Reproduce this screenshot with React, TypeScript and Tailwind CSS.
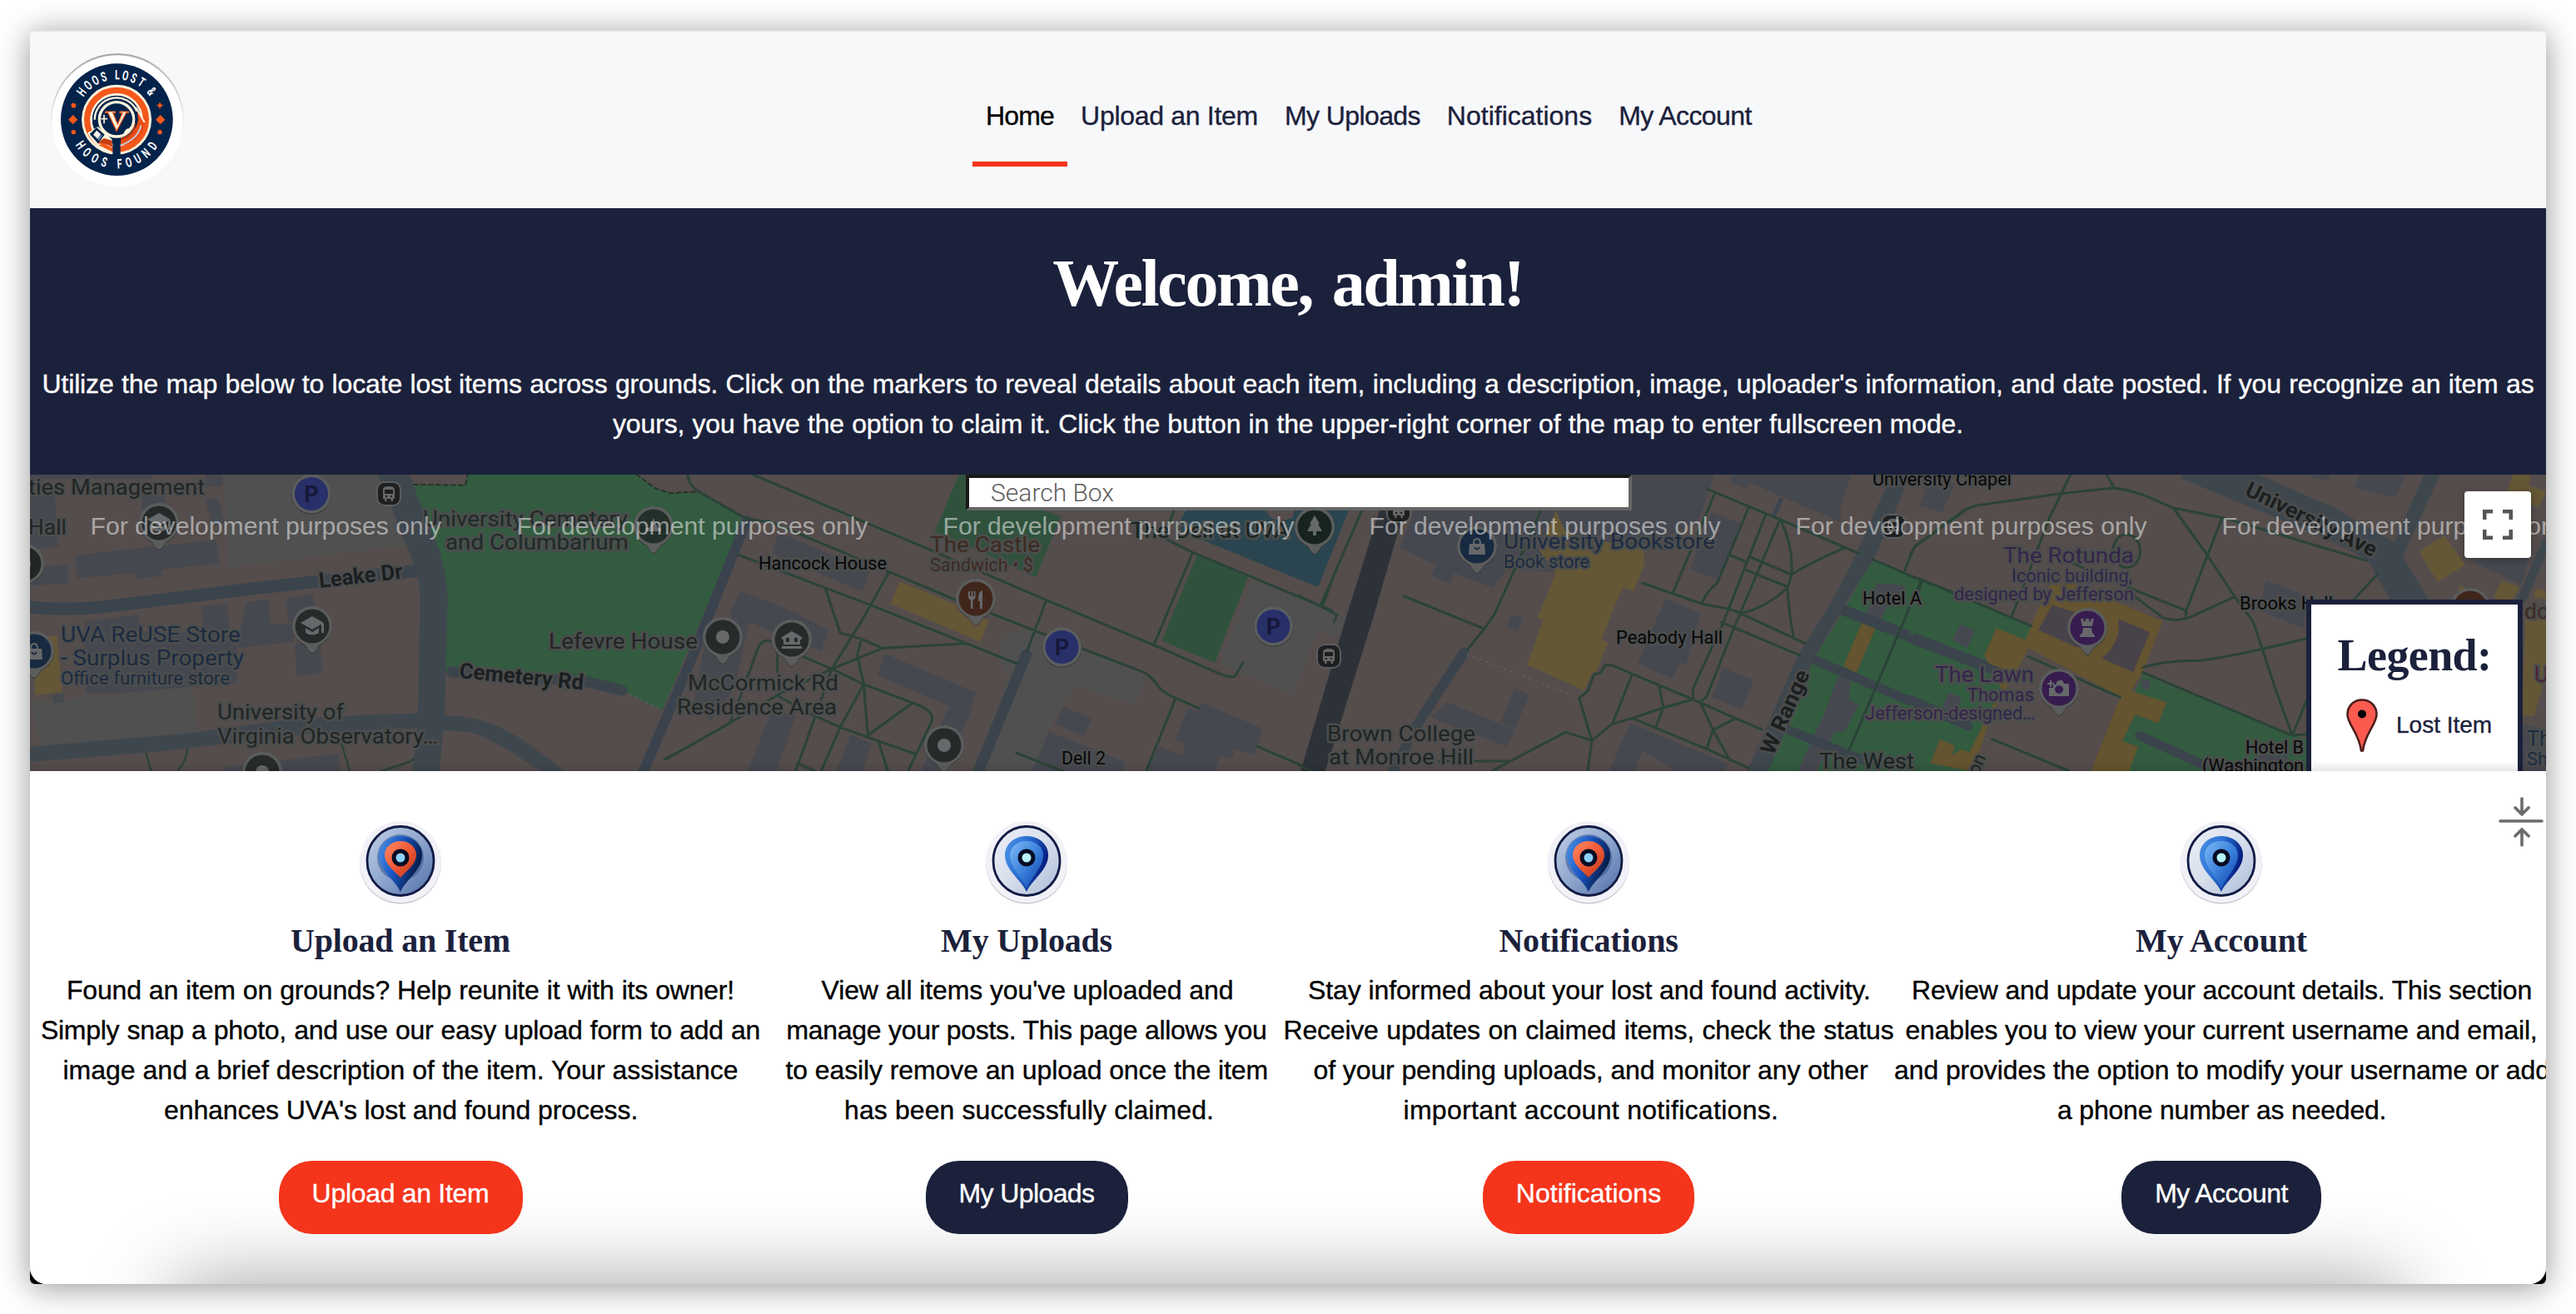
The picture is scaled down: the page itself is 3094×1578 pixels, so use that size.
import React from "react";

const SANS = "font-['Liberation_Sans',Arial,sans-serif] [-webkit-text-stroke:0.35px]";
const SERIF = "font-['Liberation_Serif',serif]";

type Line = [text: string, width: string];

/* One line of copy, spread over an exact measure. */
function Row({ text, width }: { text: string; width: string }) {
  return (
    <span className={`mx-auto block whitespace-nowrap [text-align-last:justify] ${width}`}>{text}</span>
  );
}

/* Letters of the ring lettering: character and its angle from the vertical. */
const RING_TOP: [string, number][] = [
  ["H", -52], ["O", -40], ["O", -28.5], ["S", -17], ["L", 0.5], ["O", 11], ["S", 22], ["T", 33.5], ["&", 51],
];
const RING_BOTTOM: [string, number][] = [
  ["H", 55], ["O", 42.5], ["O", 29.5], ["S", 16.5], ["F", -3.5], ["O", -15.5], ["U", -28], ["N", -41], ["D", -54],
];

function Logo() {
  return (
    <svg className="size-40 shrink-0" viewBox="180 191 480 480">
      <defs>
        <linearGradient id="logo-rim" x1="0" y1="0" x2="0" y2="1">
          <stop offset="0" stopColor="#a9a9a9" />
          <stop offset=".45" stopColor="#e6e7e9" />
          <stop offset=".7" stopColor="#fff" />
        </linearGradient>
      </defs>
      <circle cx="420" cy="431" r="240" fill="url(#logo-rim)" />
      <circle cx="420" cy="434" r="236" fill="#fff" />
      <circle cx="418" cy="430" r="202" fill="#03234b" />
      <circle cx="417" cy="430" r="126" fill="#fdf3dc" />
      <circle cx="417" cy="430" r="106" fill="none" stroke="#f4581b" strokeWidth="22" />
      <circle cx="417" cy="430" r="88" fill="#03234b" />
      <circle cx="417" cy="432" r="92" fill="none" stroke="#fdf3dc" strokeWidth="6" />
      <path d="M338 430 A79 79 0 0 1 490 400" fill="none" stroke="#fdf3dc" strokeWidth="7" />
      <path d="M490 385 L520 440 Q515 500 450 522 L432 524 L432 500 Q485 485 495 430Z" fill="#e84d17" />
      <path d="M485 440 Q488 490 432 505 V495 Q478 485 480 440Z" fill="#b93b16" />
      <path d="M505 450 Q495 500 432 522" stroke="#c9c9d3" strokeWidth="6" fill="none" />
      <path d="M486 385 L518 440" stroke="#fdf3dc" strokeWidth="6" fill="none" />
      <path d="M312 478 L350 455 L400 500 L402 550 Q345 540 312 478Z" fill="#fdf3dc" />
      <path d="M345 515 L372 497 L400 505 L402 530 L385 520Z" fill="#c93f14" />
      <path d="M352 522 L402 546 L402 532 L372 515Z" fill="#f4581b" />
      <path d="M320 482 L345 458 L374 484 L350 516Z" fill="#03234b" />
      <path d="M333 484 L345 469 L360 482 L349 500Z" fill="#f7f3ea" />
      <path d="M349 500 L360 482 L366 488 L353 506Z" fill="#5d7fa3" />
      <rect x="403" y="490" width="28" height="70" fill="#03234b" />
      <circle cx="417" cy="429" r="62" fill="#03234b" stroke="#fdf3dc" strokeWidth="10" />
      <path d="M443 478 Q450 462 462 462 Q470 450 477 450 Q470 475 443 482Z" fill="#fdf3dc" />
      <path d="M377 401 H412 V406 H404 L421 447 L438 406 H429 V401 H460 V405 H452 L417 471 L386 405 H377Z" fill="#fdf3dc" stroke="#f4581b" strokeWidth="3.500" />
      <path d="M372 412 V444 M361 427 H384" stroke="#fdf3dc" strokeWidth="5" />
      <g fill="#f4581b">
        <circle cx="262" cy="379" r="8.5" />
        <circle cx="262" cy="475" r="8" />
        <circle cx="573" cy="475" r="8" />
        <path d="M260 413 L277 430 L260 447 L243 430Z" />
        <path d="M575 413 L592 430 L575 447 L558 430Z" />
        <path d="M573 366 L577 375 L586 379 L577 383 L573 392 L569 383 L560 379 L569 375Z" />
      </g>
      <g fill="#fff" fontFamily="Roboto, sans-serif" fontWeight="700" fontSize="48" textAnchor="middle">
        {RING_TOP.map(([ch, a]) => (
          <text key={a} transform={`translate(418 430) rotate(${a}) translate(0 -145) scale(.66 1)`}>{ch}</text>
        ))}
        {RING_BOTTOM.map(([ch, a]) => (
          <text key={a} transform={`translate(418 430) rotate(${a}) translate(0 176) scale(.66 1)`}>{ch}</text>
        ))}
      </g>
    </svg>
  );
}

const NAV = [
  { label: "Home", box: "w-[114px]", text: "tracking-[-0.8px]", active: true },
  { label: "Upload an Item", box: "w-[245px]", text: "tracking-[-0.3px]" },
  { label: "My Uploads", box: "w-[195px]", text: "tracking-[-0.6px]" },
  { label: "Notifications", box: "w-[206px]", text: "tracking-[0px]" },
  { label: "My Account", box: "w-[192px]", text: "tracking-[-0.6px]" },
];

function Header() {
  return (
    <header className="flex h-[214px] items-start border-t-2 border-[#e1e3e4] bg-[#f7f8fa] pl-[25px]">
      <div className="pt-[26px]">
        <Logo />
      </div>
      <nav className={`ml-[947px] flex ${SANS} text-[32px] leading-[48px]`}>
        {NAV.map((n) => (
          <a
            key={n.label}
            className={`flex h-[162px] justify-center border-b-6 pt-[77px] whitespace-nowrap ${n.box} ${n.text} ${
              n.active ? "border-[#f4341b] text-black" : "border-transparent text-[#1b213b]"
            }`}
          >
            {n.label}
          </a>
        ))}
      </nav>
    </header>
  );
}

/* ---------- Map ---------- */

const C = {
  land: "#544d4c",
  lot: "#505050",
  bldg: "#464850",
  road: "#3f474e",
  lane: "#3b444c",
  dark: "#2d3239",
  path: "#2b4338",
  park: "#335b40",
  park2: "#30523d",
  shop: "#645736",
  water: "#2a454f",
};

/* A tile of map geometry: local units are stretched onto the map. */
function Tile({ x, children }: { x: number; children: React.ReactNode }) {
  return <g transform={`translate(${x} 560) scale(.510204 .333333)`}>{children}</g>;
}
const F = ({ d, c }: { d: string; c: string }) => <path d={d} fill={c} />;
const S = ({ d, c = C.path, w = 3, dash }: { d: string; c?: string; w?: number; dash?: string }) => (
  <path d={d} fill="none" stroke={c} strokeWidth={w} strokeLinecap="round" strokeLinejoin="round" strokeDasharray={dash} vectorEffect="non-scaling-stroke" />
);

function West() {
  return (
    <Tile x={30}>
      <F c={C.lot} d="M470 0 L835 0 L893 285 L478 365Z M15 850 L395 795 L405 965 L35 1010Z" />
      <F c={C.bldg} d="M10 30 H300 V45 H10Z M425 30 H465 V70 L425 75Z M275 100 H330 V160 H275Z M425 120 L455 115 L470 205 L440 215Z M12 110 L70 100 L78 290 L12 300Z M118 320 L450 265 L457 350 L320 372 L322 395 L260 405 L258 385 L122 403Z M12 365 L100 355 L103 422 L12 430Z M415 505 L475 495 L482 590 L420 600Z M520 490 L572 480 L580 570 L635 565 L632 632 L500 655Z M615 475 L678 462 L685 550 L620 560Z M635 640 L695 630 L700 745 L640 755Z M140 560 L268 535 L272 600 L480 590 L500 655 L498 780 L200 820 L142 820Z M65 825 L93 818 V848 L67 853Z M468 1085 L738 1035 L742 1100 H468Z" />
      <F c={C.shop} d="M18 620 L75 610 L88 812 L24 825Z" />
      <F c={C.park} d="M905 66 L1037 68 L1042 30 L1440 30 L1485 80 L1520 97 L1590 95 L1650 150 L1690 190 L1590 560 L1500 880 L1420 815 L1320 775 L980 740 L980 480 L960 300Z" />
      <S w={2} dash="5 4" c="#27332d" d="M915 66 L1037 68 L1042 30 M1440 30 L1485 80 L1520 97 L1590 90" />
      <S c={C.lane} w={15} d="M0 505 Q100 525 220 500 L540 440 L930 375" />
      <F c={C.road} d="M832 30 L905 30 L935 150 L975 300 Q995 400 995 480 L988 898 Q1050 898 1100 930 Q1150 950 1270 1100 L1215 1100 Q1130 1010 1080 975 Q1040 950 985 952 L975 1100 L912 1100 L923 945 Q700 950 560 985 L300 1030 L12 1065 V1010 L400 960 Q650 895 925 890 L930 480 Q930 400 910 330Z" />
      <S c={C.lane} w={13} d="M1005 740 L1320 775 L1405 807" />
      <S c="#4d5c50" w={3} dash="1 6" d="M1425 825 L1500 875" />
      <S c="#3a424e" w={12} d="M1699 195 L1570 690 L1453 1110" />
      <S w={2.5} d="M285 1035 L297 1098 M383 1020 L376 1060 L360 1098 M745 1000 L765 1098 M840 1098 L905 1065 L915 1055 M1505 1055 L1575 1000" />
    </Tile>
  );
}

function MidWest() {
  return (
    <Tile x={800}>
      <F c={C.lot} d="M860 582 Q790 590 785 660 Q785 730 808 760 L720 1100 H870 L900 950 L960 790 L1105 860 L1135 750 L980 655Z M1380 410 L1605 540 L1580 620 L1535 590 L1475 825 L1305 710Z" />
      <F c={C.park2} d="M690 30 L632 235 L715 290 L870 400 L930 180 L880 155 L720 30Z M1250 320 L1370 400 L1292 708 L1167 628Z" />
      <F c={C.water} d="M1225 155 H1608 L1535 435 L1270 270 L1200 225Z" />
      <F c={C.land} d="M1412 155 H1480 L1475 185 Q1440 205 1420 180Z" />
      <F c={C.bldg} d="M265 240 L330 280 L478 380 L462 450 L250 315Z M175 450 L280 510 L382 590 L365 665 L320 640 L195 560 L190 600 L160 800 L105 917 L65 850 L95 600 L160 580 L150 530Z M515 675 L730 815 L712 910 L705 920 L660 1100 H600 L645 930 L668 865 L497 752Z M250 880 L305 900 L260 1100 H190Z M435 965 L485 1000 L462 1100 H400Z M935 865 L1002 908 L985 972 L915 930Z M900 955 L1082 1065 L1072 1100 H860 L880 1035Z M1262 853 L1405 945 L1385 1040 L1340 1020 L1330 1055 L1305 1045 L1290 1100 H1130 L1160 1010 L1215 1040 L1222 1000 L1198 985 L1230 870 L1250 885Z" />
      <F c={C.shop} d="M550 415 L685 500 L760 555 L740 633 L528 495Z" />
      <S c={C.lane} w={13} d="M848 678 L732 1110" />
      <S d="M52 30 Q50 60 75 90 L190 190 L245 200 L525 380 L680 480 M205 30 L620 300 L895 482 L1150 645 L1300 745 Q1330 765 1340 755 L1358 708 M172 320 L490 505 L710 640 L828 712 M765 530 L895 608 L985 660 L1125 742 Q1145 760 1160 795 Q1175 820 1200 835 L1255 872 M525 380 L465 545 L390 730 M375 440 L410 600 L460 622 L510 655 L710 638 M510 655 L390 730 M460 622 L450 682 L465 780 L475 970 M150 925 L175 830 L215 660 Q225 620 245 630 L330 690 L390 730 L465 785 L580 852 Q635 880 625 920 L570 1098 M262 640 V740 M390 730 L260 825 L345 895 L410 940 L500 990 L585 1035 M580 852 L475 970 M390 730 L365 840 M465 785 L410 940 L365 1098 M350 905 L305 1098 M262 825 L150 925 L0 1055 M500 990 L522 1098 M310 1070 L350 1098 M895 482 L850 665 M1200 835 L1130 1098 M825 1033 L935 1098 M1195 160 L1175 250 M1180 265 L1240 310 L1568 520 M1240 310 L1148 645 M1545 505 L1568 410 M1390 1008 L1500 1080" />
    </Tile>
  );
}

function MidEast() {
  return (
    <Tile x={1560}>
      <F c={C.bldg} d="M275 150 L700 150 L780 30 H978 L940 200 L800 300 L600 300 L600 380 L490 370 L455 437 L365 385 L355 422 L313 395 L322 355 L237 295Z M502 533 L527 545 L515 598 L490 578Z M970 165 L1040 205 L985 410 L922 370Z M863 477 L945 530 L912 715 L898 708 L880 765 L798 710Z M1000 725 L1070 770 L1042 877 L972 830Z M508 800 L543 825 L508 945 L475 925Z M348 850 L508 950 L490 1010 L310 905Z M780 925 L945 1030 L1010 1070 L1003 1100 H890 L810 1025 L790 1100 H730Z M1020 30 H1300 L1275 150 V200 L1062 60 L1052 80 L1015 60Z M1480 60 L1545 60 L1515 165 L1462 140Z" />
      <F c={C.shop} d="M605 160 L630 240 L810 300 L815 350 L788 450 L762 437 L712 625 L728 635 L700 740 L690 745 L672 808 L537 715 L575 555 L562 545 L605 385 L565 300Z" />
      <F c={C.park} d="M1350 335 L1620 505 L1725 580 L1640 1100 H1090 L1215 690 L1290 500Z" />
      <F c="#64542f" d="M1325 563 L1357 585 L1313 745 L1282 720Z" />
      <F c={C.bldg} d="M1360 420 L1430 430 L1390 490 L1370 555 L1335 540Z M1270 755 L1300 770 L1295 840 L1318 860 L1285 955 L1260 960 L1220 1100 H1175 L1215 960 L1235 900Z M1530 815 L1560 835 L1548 890 L1515 870Z" />
      <S c={C.lane} w={13} d="M1285 520 L1660 748" />
      <S c={C.lane} w={11} d="M1210 695 L1575 935 M1145 945 L1340 1065" />
      <F c={C.road} d="M1395 30 H1440 L1352 340 L1285 500 L1210 700 L1160 900 L1105 1100 H1055 L1175 680 L1250 500 L1305 340Z" />
      <F c={C.dark} d="M192 150 H250 L172 560 L62 1100 H4 L112 540Z" />
      <S c={C.lane} w={12} d="M388 672 L275 940" />
      <S c={C.lane} w={12} d="M255 1000 L220 1100" />
      <S c="#3b444e" w={5} d="M1135 120 L1118 180" />
      <S c="#5d5f57" w={2} dash="1 7" d="M397 678 L660 835" />
      <S d="M148 160 L52 500 M0 465 L90 535 L83 560 M570 160 L460 535 Q430 600 397 660 M248 468 L435 585 M962 82 L1060 145 L1130 190 L1320 315 M980 95 L880 458 M1060 145 L985 420 Q960 450 948 495 M1100 170 L1000 560 L928 800 V840 M1133 190 L1025 580 L960 830 L945 850 M1133 190 Q1165 290 1160 390 L1150 440 Q1155 540 1165 620 M1283 295 Q1200 350 1160 390 M1060 325 L1160 390 M1050 372 L1152 435 Q1100 510 1040 530 M808 420 L948 495 L1015 515 L1040 530 L1192 638 M995 562 L1178 680 M1015 320 L1055 345 M660 835 L680 810 L695 750 L710 745 L722 715 L740 718 L785 748 L928 840 L1028 908 L1090 948 M785 748 L738 928 M848 790 L858 870 L842 935 M660 835 L690 988 L738 928 L785 908 L858 870 L928 840 M785 908 L960 1018 L1060 1088 M945 850 L975 950 L1015 1060 M1028 908 L975 950 L960 1018 M690 988 L680 1098 M690 988 L628 958 L498 1062 H330 M498 1062 L455 1098 M1350 335 L1465 410 L1568 470 M1425 380 L1450 288 L1568 160 M1465 410 L1295 1025 M0 1075 L30 1098" />
    </Tile>
  );
}

function East() {
  return (
    <Tile x={2294}>
      <F c={C.park} d="M548 750 L900 970 L940 985 V1100 H425 L525 830Z M0 400 L10 405 V1100 H60 L0 1100Z" />
      <F c="#64542f" d="M330 430 L385 425 L595 558 L548 740 L520 810 L605 850 L585 925 L530 895 L500 990 L537 1010 L515 1100 H425 L495 830 L280 655 L190 900 L150 1100 L48 1070 L70 983 L105 1005 L100 1040 L120 1020 L140 1030 L215 800 L175 680 L203 583 L272 625 L300 520Z" />
      <F c={C.land} d="M278 660 L495 830 L425 1100 H150 L190 900Z" />
      <F c="#48424b" d="M335 500 L460 560 Q460 620 430 660 L390 650 L302 590Z M490 550 L565 598 L525 742 L452 692 Q500 630 490 550Z" />
      <F c={C.bldg} d="M118 570 L153 590 L135 655 L100 625Z M90 815 L122 835 L105 890 L80 870Z M545 765 L568 775 L560 808 L545 795Z M1060 30 H1165 L1145 110 L1100 100 L1045 75Z M930 30 H990 L985 55Z M838 412 L930 465 V585 L822 520Z M1325 345 L1465 290 L1440 425Z M820 1040 L890 1045 L880 1098 H820Z" />
      <F c={C.shop} d="M1420 30 H1460 L1458 70 L1497 90 L1480 150 L1405 90Z M1258 250 L1307 355 L1243 418 L1198 307Z M1393 410 L1435 435 L1410 500 L1375 470Z M1295 430 L1310 440 L1300 470 L1290 450Z M1475 440 L1497 450 V480 L1468 470Z M1450 520 L1497 550 V740 L1470 900 L1440 900Z" />
      <F c={C.bldg} d="M1440 930 L1500 950 V1100 H1443Z" />
      <F c={C.road} d="M640 30 H820 L1000 150 L1140 275 L1210 30 H1248 L1160 325 L1225 490 H1135 L1080 345 Q1040 300 950 240 L640 45Z" />
      <S c={C.road} w={11} d="M1500 270 L1440 480" />
      <S c={C.lane} w={11} d="M0 620 L215 745" />
      <S c={C.lane} w={11} d="M0 840 L135 930 M540 970 L690 1075" />
      <ellipse cx="510" cy="305" rx="32" ry="60" fill="none" stroke={C.path} strokeWidth="3" vectorEffect="non-scaling-stroke" />
      <S d="M378 30 L330 180 L240 540 M463 30 L480 75 M0 320 L12 290 L130 155 L160 140 L355 98 L480 78 Q520 85 560 110 L620 150 L735 185 L770 200 L1075 340 M620 150 L700 320 L765 470 L808 560 L860 800 L900 970 M735 185 L650 520 V550 L765 470 M370 340 L520 440 L650 520 M530 470 L595 545 Q620 560 650 548 M548 725 Q600 700 680 700 Q740 690 830 658 L935 620 M548 742 L900 970 L935 965 M935 840 L900 970 M0 395 L30 410 L285 575 M30 410 L20 450 M1045 480 L1100 390 M278 685 L495 832 M193 983 L375 1098" />
    </Tile>
  );
}

type LabelT = [text: string, x1: number, x2: number, y: number, size: number, color: string];
const INK = "#212525";
const BLUE = "#1c2b41";
const PURPLE = "#33254a";
const BROWN = "#3f2a20";
const LABELS: LabelT[] = [
  ["ties Management", 34, 246, 594, 26, INK],
  ["Hall", 34, 80, 641.7, 26, INK],
  ["University Cemetery", 508, 754, 631.7, 26, "#1e2b26"],
  ["and Columbarium", 535, 755, 660, 26, "#1e2b26"],
  ["UVA ReUSE Store", 73, 289, 770.7, 26, BLUE],
  ["- Surplus Property", 73, 293, 798.7, 26, BLUE],
  ["Office furniture store", 73, 276, 821.7, 22, BLUE],
  ["University of", 261, 413, 864, 26, INK],
  ["Virginia Observatory…", 261, 526, 892.7, 26, INK],
  ["Lefevre House", 659, 838, 778.7, 26, INK],
  ["Hancock House", 911, 1065, 684, 22, "#070707"],
  ["The Castle", 1117, 1249, 662.7, 26, BROWN],
  ["Sandwich • $", 1117, 1241, 685.7, 22, BROWN],
  ["The Dell at UVA", 1358, 1548, 646, 26, "#17231e"],
  ["McCormick Rd", 826, 1007, 829, 26, INK],
  ["Residence Area", 813, 1005, 857.7, 26, INK],
  ["Dell 2", 1275, 1328, 917.7, 22, "#070707"],
  ["University Bookstore", 1806, 2060, 658.7, 26, BLUE],
  ["Book store", 1806, 1909, 682, 22, BLUE],
  ["Peabody Hall", 1941, 2069, 772.7, 22, "#070707"],
  ["Hotel A", 2237, 2308, 725.7, 22, "#070707"],
  ["University Chapel", 2249, 2416, 582.7, 22, "#070707"],
  ["Brown College", 1594, 1772, 890, 26, INK],
  ["at Monroe Hill", 1596, 1770, 918, 26, INK],
  ["The West", 2185, 2299, 922.7, 26, "#17231e"],
  ["Jefferson-designed…", 2240, 2444, 863.7, 22, PURPLE],
  ["The Rotunda", 2406, 2563, 675.7, 26, PURPLE],
  ["Iconic building,", 2416, 2561, 698.7, 22, PURPLE],
  ["designed by Jefferson", 2347, 2563, 720.7, 22, PURPLE],
  ["The Lawn", 2324, 2443, 819, 26, PURPLE],
  ["Thomas", 2363, 2443, 842, 22, PURPLE],
  ["Brooks Hall", 2690, 2802, 731.7, 22, "#070707"],
  ["Hotel B", 2697, 2767, 904.7, 22, "#070707"],
  ["(Washington", 2645, 2767, 927, 22, "#070707"],
  ["do", 3032, 3062, 743, 26, BROWN],
  ["U", 3044, 3061, 819, 26, "#4a2034"],
  ["Th", 3035, 3064, 896, 26, BLUE],
  ["Sh", 3035, 3060, 919, 22, BLUE],
];

type PinKind = "dot" | "cap" | "bag" | "fork" | "tree" | "hall" | "rook" | "camera" | "tent";
const GLYPHS: Record<PinKind, React.ReactNode> = {
  dot: <circle r="8" />,
  cap: <path d="M0 -12 L14 -4 L0 4 L-14 -4Z M-8 2 L0 7 L8 2 V8 Q0 13 -8 8Z M11 -3 H14 V8 H11Z" />,
  bag: <path fillRule="evenodd" d="M-9 -3 H-5 Q-5 -10 0 -10 Q5 -10 5 -3 H9 L10 10 H-10Z M-3 -3 H3 Q3 -8 0 -8 Q-3 -8 -3 -3Z M-4 1 Q0 8 4 1 L2 1 Q0 4 -2 1Z" />,
  fork: <path d="M-9 -9 h2 v6 h1.5 v-6 h2 v6 h1.5 v-6 h1.5 v8 l-3 3 v10 h-2.500 v-10 l-3 -3Z M3 0 Q3 -9 8 -10 V12 H5 V3 H3Z" />,
  tree: <path d="M0 -14 L6 -4 H4 L9 5 H2 V10 H-2 V5 H-9 L-4 -4 H-6Z" />,
  hall: <path fillRule="evenodd" d="M0 -10 L12 -3 V0 H10 V6 H-10 V0 H-12 V-3Z M-7 -2 V3 H-3 V-2Z M3 -2 V3 H7 V-2Z M-12 8 H12 V11 H-12Z" />,
  rook: <path d="M-8 -11 H-4.500 V-8 H-2 V-11 H2 V-8 H4.500 V-11 H8 L6 -2 H-6Z M-5 0 H5 L6 6 L9 9 V11 H-9 V9 L-6 6Z" />,
  camera: <path fillRule="evenodd" d="M-7 -5 H-3 V-8 L0 -10 H4 L6 -6 H12 V9 H-12 V-1 H-7Z M0 -4 a5 5 0 1 0 .1 0Z M-11 -10 h2 v3 h3 v2 h-3 v3 h-2 v-3 h-3 v-2 h3Z" />,
  tent: <path d="M0 -10 L5 2 H9 V6 H-9 V2 H-5Z" />,
};
const PINS: [number, number, string, PinKind][] = [
  [191, 628, "#272a2b", "cap"],
  [785, 632, "#23302a", "tent"],
  [375, 752, "#272a2b", "cap"],
  [315, 927, "#272a2b", "dot"],
  [41, 782, "#182a40", "bag"],
  [29, 677, "#232627", "dot"],
  [868, 765, "#272a2b", "dot"],
  [951, 768, "#272a2b", "hall"],
  [1172, 719, "#40261a", "fork"],
  [1134, 895, "#272a2b", "dot"],
  [1579, 633, "#16241d", "tree"],
  [1774, 656, "#182a40", "bag"],
  [2507, 754, "#371c50", "rook"],
  [2473, 827, "#371c50", "camera"],
  [2967, 730, "#40261a", "dot"],
];

function CampusMap() {
  return (
    <svg className="block h-full w-full" viewBox="36 570 3022 356" preserveAspectRatio="none">
      <rect x="36" y="570" width="3022" height="356" fill={C.land} />
      <West />
      <MidWest />
      <MidEast />
      <East />
      {[[374, 593], [1275.5, 777], [1529.5, 752]].map(([x, y]) => (
        <g key={x}>
          <circle cx={x} cy={y + 1} r="24" fill="#3f4140" />
          <circle cx={x} cy={y} r="23.500" fill="#5b5d5e" />
          <circle cx={x} cy={y} r="20" fill="#28306a" />
          <text x={x} y={y + 9.5} textAnchor="middle" fontFamily="Roboto" fontWeight="700" fontSize="27" fill="#17183a">P</text>
        </g>
      ))}
      {[[467, 593], [1596, 788], [1680, 613], [2274, 632]].map(([x, y]) => (
        <g key={x} transform={`translate(${x} ${y})`}>
          <rect x="-15" y="-15" width="30" height="30" rx="10" fill="#5b5d5e" />
          <rect x="-13" y="-13" width="26" height="26" rx="8" fill="#1d1f21" />
          <path fillRule="evenodd" fill="#666" d="M-7 -5 Q-7 -9 0 -9 Q7 -9 7 -5 V6 H5 V9 H2.500 V6 H-2.500 V9 H-5 V6 H-7Z M-5 -5 V0 H5 V-5Z M-4 2 V4 H-2 V2Z M2 2 V4 H4 V2Z" />
        </g>
      ))}
      {PINS.map(([x, y, c, kind]) => (
        <g key={`${x}-${y}`} transform={`translate(${x} ${y})`}>
          <path d="M0 32 Q-3 32 -8 23 Q-24 14 -24 0 A24 24 0 0 1 24 0 Q24 14 8 23 Q3 32 0 32Z" fill="#343635" transform="translate(0 1)" />
          <path d="M0 32 Q-3 32 -8 23 Q-24 14 -24 0 A24 24 0 0 1 24 0 Q24 14 8 23 Q3 32 0 32Z" fill="#5b5d5d" />
          <circle r="20.500" fill={c} />
          <g fill="#66686a">{GLYPHS[kind]}</g>
        </g>
      ))}
      <g fontFamily="Roboto, sans-serif" stroke="#4b4d4d" strokeWidth="5" strokeLinejoin="round" paintOrder="stroke">
        {LABELS.map(([t, x1, x2, y, size, color]) => (
          <text key={t} x={x1} y={y} fontSize={size} fill={color} textLength={x2 - x1} lengthAdjust="spacingAndGlyphs">
            {t}
          </text>
        ))}
        <g fontSize="26" fontWeight="700" fill="#1c1f21">
          <text transform="translate(384 706) rotate(-6.500)" textLength="101" lengthAdjust="spacingAndGlyphs">Leake Dr</text>
          <text transform="translate(551 814) rotate(5.500)" textLength="150" lengthAdjust="spacingAndGlyphs">Cemetery Rd</text>
          <text transform="translate(2130 908) rotate(-66)" textLength="108" lengthAdjust="spacingAndGlyphs">W Range</text>
          <text transform="translate(2695 594) rotate(26)" textLength="172" lengthAdjust="spacingAndGlyphs">University Ave</text>
        </g>
        <text transform="translate(2376 932) rotate(-66)" fontSize="22" fill={INK}>on</text>
      </g>
      <g fontFamily="Liberation Sans, Arial, sans-serif" fontSize="30" fill="#fff" fillOpacity=".5">
        {[109, 621, 1133, 1645, 2157, 2669].map((x) => (
          <text key={x} x={x - 0.5} y="642" textLength="422" lengthAdjust="spacingAndGlyphs">For development purposes only</text>
        ))}
      </g>
    </svg>
  );
}

function MapPanel() {
  return (
    <section className="relative h-[356px] overflow-hidden">
      <CampusMap />
      <div className="absolute top-0 left-[1124px] flex h-[43px] w-[800px] items-center border-4 border-t-[#191919] border-r-[#666] border-b-[#666] border-l-[#191919] bg-white pl-[26px] font-['Roboto',sans-serif] text-[30px] leading-none font-light text-[#5f5f5f]">
        Search Box
      </div>
      <button className="absolute top-5 right-[18px] flex size-20 items-center justify-center rounded-[4px] bg-white shadow-[0_2px_8px_rgba(0,0,0,.3)]">
        <svg className="size-9" viewBox="0 0 36 36" fill="none" stroke="#555" strokeWidth="4.500">
          <path d="M2.250 12 V2.250 H12 M24 2.250 H33.750 V12 M33.750 24 V33.750 H24 M12 33.750 H2.250 V24" />
        </svg>
      </button>
      <div className="absolute top-[150px] left-[2734px] h-[260px] w-[260px] border-6 border-[#1b213b] bg-white pt-[29px] text-[#1b213b]">
        <h3 className={`${SERIF} text-center text-[54px] leading-[64px] font-bold tracking-[-0.6px]`}>Legend:</h3>
        <div className="mt-5 flex items-start pl-[42px]">
          <svg className="h-16 w-[38px]" viewBox="0 0 38 64">
            <path d="M19 1.500 C9 1.500 1.500 9 1.500 19 C1.500 31 15 40 18 62.500 H20 C23 40 36.500 31 36.500 19 C36.500 9 29 1.500 19 1.500Z" fill="#fb5b4f" stroke="#4a1d1a" strokeWidth="2.500" />
            <circle cx="19" cy="18.500" r="5" fill="#000" />
          </svg>
          <span className={`ml-[22px] pt-[16px] ${SANS} text-[28px] leading-8 tracking-[0px] whitespace-nowrap`}>Lost Item</span>
        </div>
      </div>
      <div className="absolute inset-x-0 bottom-0 h-3 bg-linear-to-t from-black/10 to-transparent" />
    </section>
  );
}

/* ---------- Features ---------- */

function PinBadge({ hot, id }: { hot?: boolean; id: string }) {
  return (
    <svg className="size-[102px]" viewBox="-51 -51 102 102">
      <defs>
        <linearGradient id={`${id}-disc`} x1="0" y1="0" x2="1" y2="1">
          <stop offset="0" stopColor={hot ? "#c3d0e8" : "#eceef6"} />
          <stop offset=".5" stopColor={hot ? "#8fa6cd" : "#d8dfec"} />
          <stop offset="1" stopColor={hot ? "#4f6ca6" : "#a9bbd6"} />
        </linearGradient>
        <linearGradient id={`${id}-pin`} x1="0" y1="0" x2="1" y2=".4">
          <stop offset="0" stopColor="#4b93e6" />
          <stop offset=".5" stopColor={hot ? "#1a56c4" : "#2a6fd2"} />
          <stop offset="1" stopColor={hot ? "#061a45" : "#02187c"} />
        </linearGradient>
        <linearGradient id={`${id}-face`} x1="0" y1="0" x2="1" y2="1">
          <stop offset="0" stopColor={hot ? "#ff8a68" : "#7db9f5"} />
          <stop offset=".5" stopColor={hot ? "#f05a35" : "#3c82dc"} />
          <stop offset="1" stopColor={hot ? "#b93317" : "#0a3aa8"} />
        </linearGradient>
      </defs>
      <circle cy="1.500" r="49" fill="#c9c9cd" />
      <circle r="49" fill="#f1f1f7" />
      <ellipse cy="-1" rx="40" ry="41.500" fill={`url(#${id}-disc)`} stroke="#101a44" strokeWidth="2.800" />
      {hot && <circle cy="-5" r="28" fill="#2f548f" opacity=".55" />}
      <path d="M0 36 C-6 22 -26 10 -26 -8 C-26 -22 -14 -31 0 -31 C14 -31 26 -22 26 -8 C26 10 6 22 0 36Z" fill={`url(#${id}-pin)`} />
      <path
        d={hot ? "M0 19 C-5 13 -19 3 -19 -8 C-19 -18 -10 -25 0 -25 C10 -25 19 -18 19 -8 C19 3 5 13 0 19Z" : "M0 32 C-6 18 -20 6 -20 -8 C-20 -18 -11 -25 0 -25 C11 -25 20 -18 20 -8 C20 6 6 18 0 32Z"}
        fill={`url(#${id}-face)`}
      />
      <circle cy="-5" r="10.500" fill="#060c24" />
      <circle cy="-5" r="5.500" fill={hot ? "#8fd2ff" : "#b8f4fb"} />
    </svg>
  );
}

type Feature = {
  id: string;
  title: string;
  col: string;
  lines: Line[];
  hot?: boolean;
  button: string;
};

const FEATURES: Feature[] = [
  {
    id: "upload",
    title: "Upload an Item",
    col: "w-[890px]",
    hot: true,
    button: "w-[293px] tracking-[-0.3px]",
    lines: [
      ["Found an item on grounds? Help reunite it with its owner!", "w-[802px] tracking-[-0.2px]"],
      ["Simply snap a photo, and use our easy upload form to add an", "w-[864px] tracking-[-0.3px]"],
      ["image and a brief description of the item. Your assistance", "w-[811px] tracking-[0px]"],
      ["enhances UVA's lost and found process.", "w-[568px] tracking-[-0.1px]"],
    ],
  },
  {
    id: "uploads",
    title: "My Uploads",
    col: "w-[614px]",
    button: "w-[243px] tracking-[-0.6px]",
    lines: [
      ["View all items you've uploaded and", "w-[493px] tracking-[-0.1px]"],
      ["manage your posts. This page allows you", "w-[577px] tracking-[-0.3px]"],
      ["to easily remove an upload once the item", "w-[579px] tracking-[-0.1px]"],
      ["has been successfully claimed.", "w-[438px] tracking-[0.1px]"],
    ],
  },
  {
    id: "notifications",
    title: "Notifications",
    col: "w-[736px]",
    hot: true,
    button: "w-[254px] tracking-[0px]",
    lines: [
      ["Stay informed about your lost and found activity.", "w-[674px] tracking-[-0.1px]"],
      ["Receive updates on claimed items, check the status", "w-[733px] tracking-[-0.2px]"],
      ["of your pending uploads, and monitor any other", "w-[661px] tracking-[-0.1px]"],
      ["important account notifications.", "w-[445px] tracking-[0.3px]"],
    ],
  },
  {
    id: "account",
    title: "My Account",
    col: "w-[784px]",
    button: "w-[240px] tracking-[-0.6px]",
    lines: [
      ["Review and update your account details. This section", "w-[744px] tracking-[-0.2px]"],
      ["enables you to view your current username and email,", "w-[759px] tracking-[-0.2px]"],
      ["and provides the option to modify your username or add", "w-[786px] tracking-[-0.1px]"],
      ["a phone number as needed.", "w-[394px] tracking-[-0.2px]"],
    ],
  },
];

function FeatureCard({ f }: { f: Feature }) {
  return (
    <article className={`flex shrink-0 flex-col items-center ${f.col}`}>
      <PinBadge hot={f.hot} id={f.id} />
      <h2 className={`mt-5 ${SERIF} text-[40px] leading-[48px] font-bold tracking-[-0.2px] whitespace-nowrap text-[#1b213b]`}>{f.title}</h2>
      <p className={`mt-[11px] ${SANS} text-[32px] leading-[48px] text-black`}>
        {f.lines.map(([t, w]) => (
          <Row key={t} text={t} width={w} />
        ))}
      </p>
      <button
        className={`mt-[37px] flex h-[88px] items-start justify-center rounded-[40px] pt-[15px] ${SANS} text-[32px] leading-[48px] whitespace-nowrap text-white ${f.button} ${
          f.hot ? "bg-[#f4341b]" : "bg-[#1b213b]"
        }`}
      >
        {f.title}
      </button>
    </article>
  );
}

export default function App() {
  return (
    <div className="h-[1578px] w-[3094px] overflow-hidden bg-white px-9 pt-9">
      <div className="h-[1506px] rounded-md bg-black shadow-[0_4px_38px_rgba(0,0,0,.42)]">
        <main className="relative h-full overflow-hidden rounded-t-md rounded-b-[20px] bg-white">
          <Header />
          <section className="h-80 bg-[#1b213b] pt-[42px] text-center text-white">
            <h1 className={`${SERIF} text-[80px] leading-[96px] font-bold tracking-[-2.4px] word-spacing-normal [word-spacing:6px]`}>Welcome, admin!</h1>
            <p className={`mt-[49px] ${SANS} text-[32px] leading-[48px] tracking-[-0.15px]`}>
              <Row
                width="w-[2993px]"
                text="Utilize the map below to locate lost items across grounds. Click on the markers to reveal details about each item, including a description, image, uploader's information, and date posted. If you recognize an item as"
              />
              <Row
                width="w-[1622px]"
                text="yours, you have the option to claim it. Click the button in the upper-right corner of the map to enter fullscreen mode."
              />
            </p>
          </section>
          <MapPanel />
          <section className="relative h-[616px] bg-white">
            <div className="absolute inset-0 overflow-hidden">
              <div className="absolute top-full right-[175px] left-[175px] h-32 shadow-[0_0_100px_rgba(0,0,0,.38)]" />
            </div>
            <div className="relative flex pt-[58px]">
              {FEATURES.map((f) => (
                <FeatureCard key={f.id} f={f} />
              ))}
            </div>
            <svg className="absolute top-[30px] right-[3px] h-[62px] w-[54px]" viewBox="0 0 54 62" fill="none" stroke="#6b6b6b" strokeWidth="3.600" strokeLinecap="round" strokeLinejoin="round">
              <path d="M2 30 H52 M28 3 V21 M20 14 L28 22 L36 14 M28 59 V41 M20 48 L28 40 L36 48" />
            </svg>
          </section>
        </main>
      </div>
    </div>
  );
}
